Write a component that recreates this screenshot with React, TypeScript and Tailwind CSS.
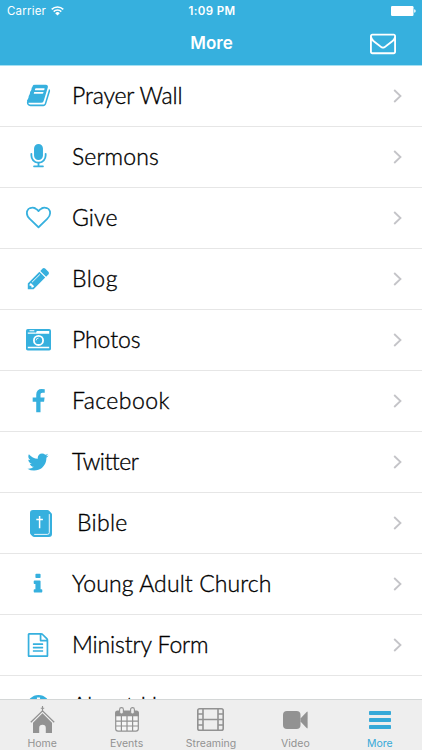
import React from "react";
import clsx from "clsx";

type IconProps = { className?: string };

// Solid glyph on the 1792 unit grid
function Glyph({ d, className }: { d: string; className?: string }) {
  return (
    <svg viewBox="0 0 1792 1792" fill="currentColor" className={className}>
      <path d={d} />
    </svg>
  );
}

const paths = {
  book: "M1703 478q40 57 18 129l-275 906q-19 64-76.500 107.500t-122.500 43.500h-923q-77 0-148.500-53.500t-99.500-131.500q-24-67-2-127 0-4 3-27t4-37q1-8-3-21.500t-3-19.500q2-11 8-21t16.500-23.500 16.500-23.500q23-38 45-91.500t30-91.500q3-10 .5-30t-.5-28q3-11 17-28t17-23q21-36 42-92t25-90q1-9-2.500-32t.5-28q4-13 22-30.500t22-22.500q19-26 42.500-84.500t27.500-96.500q1-8-3-25.500t-2-26.500q2-8 9-18t18-23 17-21q8-12 16.500-30.500t15-35 16-36 19.500-32 26.500-23.500 36-11.500 47.500 5.500l-1 3q38-9 51-9h761q74 0 114 56t18 130l-274 906q-36 119-71.500 153.500t-128.500 34.500h-869q-27 0-38 15-11 16-1 43 24 70 144 70h923q29 0 56-15.500t35-41.500l300-987q7-22 5-57 38 15 59 43zm-1064 2q-4 13 2 22.500t20 9.500h608q13 0 25.500-9.500t16.500-22.500l21-64q4-13-2-22.500t-20-9.500h-608q-13 0-25.500 9.500t-16.500 22.500zm-83 256q-4 13 2 22.500t20 9.500h608q13 0 25.500-9.500t16.500-22.500l21-64q4-13-2-22.500t-20-9.500h-608q-13 0-25.500 9.500t-16.500 22.500z",
  microphone: "M1472 704v128q0 221-147.500 384.500t-364.500 187.500v132h256q26 0 45 19t19 45-19 45-45 19h-640q-26 0-45-19t-19-45 19-45 45-19h256v-132q-217-24-364.500-187.500t-147.500-384.500v-128q0-26 19-45t45-19 45 19 19 45v128q0 185 131.500 316.500t316.500 131.500 316.500-131.500 131.500-316.500v-128q0-26 19-45t45-19 45 19 19 45zm-256-384v512q0 132-94 226t-226 94-226-94-94-226v-512q0-132 94-226t226-94 226 94 94 226z",
  heart: "M1664 596q0-81-21.500-143t-55-98.500-81.500-59.500-94-31-98-8-112 25.500-110.500 64-86.500 72-60 61.500q-18 22-49 22t-49-22q-24-28-60-61.500t-86.500-72-110.500-64-112-25.500-98 8-94 31-81.500 59.500-55 98.500-21.500 143q0 168 187 355l581 560 580-559q188-188 188-356zm128 0q0 221-229 450l-623 600q-18 18-44 18t-44-18l-624-602q-10-8-27.500-26t-55.500-65.500-68-97.500-53.500-121-23.500-138q0-220 127-344t351-124q62 0 126.500 21.500t120 58 95.500 68.500 76 68q36-36 76-68t95.500-68.500 120-58 126.500-21.500q224 0 351 124t127 344z",
  pencil: "M491 1536l91-91-235-235-91 91v107h128v128h107zm523-928q0-22-22-22-10 0-17 7l-542 542q-7 7-7 17 0 22 22 22 10 0 17-7l542-542q7-7 7-17zm-54-192l416 416-832 832h-416v-416zm683 96q0 53-37 90l-166 166-416-416 166-165q36-38 90-38 53 0 91 38l235 234q37 39 37 91z",
  facebook: "M1343 12v264h-157q-86 0-116 36t-30 108v189h293l-39 296h-254v759h-306v-759h-255v-296h255v-218q0-186 104-288.500t277-102.500q147 0 228 12z",
  twitter: "M1684 408q-67 98-162 167 1 14 1 42 0 130-38 259.500t-115.500 248.500-184.500 210.500-258 146-323 54.500q-271 0-496-145 35 4 78 4 225 0 401-138-105-2-188-64.500t-114-159.500q33 5 61 5 43 0 85-11-112-23-185.500-111.500t-73.500-205.500v-4q68 38 146 41-66-44-105-115t-39-154q0-88 44-163 121 149 294.500 238.500t371.500 99.500q-8-38-8-74 0-134 94.500-228.500t228.500-94.500q140 0 236 102 109-21 205-78-37 115-142 178 93-10 186-50z",
  info: "M1216 1344v128q0 26-19 45t-45 19h-512q-26 0-45-19t-19-45v-128q0-26 19-45t45-19h64v-384h-64q-26 0-45-19t-19-45v-128q0-26 19-45t45-19h384q26 0 45 19t19 45v576h64q26 0 45 19t19 45zm-128-1152v192q0 26-19 45t-45 19h-256q-26 0-45-19t-19-45v-192q0-26 19-45t45-19h256q26 0 45 19t19 45z",
  file: "M1596 380q28 28 48 76t20 88v1152q0 40-28 68t-68 28h-1344q-40 0-68-28t-28-68v-1600q0-40 28-68t68-28h896q40 0 88 20t76 48zm-444-244v376h376q-10-29-22-41l-313-313q-12-12-41-22zm384 1528v-1024h-416q-40 0-68-28t-28-68v-416h-768v1536h1280zm-1024-864q0-14 9-23t23-9h704q14 0 23 9t9 23v64q0 14-9 23t-23 9h-704q-14 0-23-9t-9-23v-64zm736 224q14 0 23 9t9 23v64q0 14-9 23t-23 9h-704q-14 0-23-9t-9-23v-64q0-14 9-23t23-9h704zm0 256q14 0 23 9t9 23v64q0 14-9 23t-23 9h-704q-14 0-23-9t-9-23v-64q0-14 9-23t23-9h704z",
  envelope: "M1664 1504v-768q-32 36-69 66-268 206-426 338-51 43-83 67t-86.500 48.500-102.500 24.500h-2q-48 0-102.500-24.500t-86.500-48.500-83-67q-158-132-426-338-37-30-69-66v768q0 13 9.500 22.500t22.500 9.500h1472q13 0 22.500-9.500t9.500-22.500zm0-1051v-24.500l-.5-13-3-12.500-5.500-9-9-7.500-14-2.500h-1472q-13 0-22.500 9.500t-9.500 22.500q0 168 147 284 193 152 401 317 6 5 35 29.500t46 37.500 44.500 31.500 50.500 27.500 43 9h2q20 0 43-9t50.500-27.500 44.500-31.500 46-37.500 35-29.500q208-165 401-317 54-43 100.500-115.500t46.500-131.500zm128-37v1088q0 66-47 113t-113 47h-1472q-66 0-113-47t-47-113v-1088q0-66 47-113t113-47h1472q66 0 113 47t47 113z",
};

function CameraIcon({ className }: IconProps) {
  return (
    <svg viewBox="0 0 25 25" className={className}>
      <rect x="0" y="2" width="25" height="21.5" rx="1.8" fill="currentColor" />
      <path d="M10.800 4.100h12.400v2.700H9.600zM1.800 19.800h21.400v1.500H1.800z" fill="#fff" />
      <path d="M3.500 3.300h4.800v1H3.500zM1.800 5.600h8v1.200h-8z" fill="#fff" />
      <circle cx="12.5" cy="13.4" r="4.6" fill="none" stroke="#fff" strokeWidth="1.8" />
      <path d="M10.200 13.400a2.300 2.300 0 0 1 2.300-2.300" fill="none" stroke="#fff" strokeWidth=".8" />
    </svg>
  );
}

function BibleIcon({ className }: IconProps) {
  return (
    <svg viewBox="0 0 22 27" className={className}>
      <path d="M3 0h14.500q1.700 0 2.300 1.500l1 .9q1.200.8 1.200 2.100V24q0 3-3 3H4.500q-1.500 0-2.600-1.200L.8 24.600Q0 23.800 0 22.500V3q0-3 3-3z" fill="currentColor" />
      <path d="M19.300 4.500v18q0 1.900-1.900 1.900H4.600" fill="none" stroke="#fff" strokeWidth=".9" strokeLinecap="round" />
      <path d="M9.600 6v12.200M6.300 9.400h6.600" fill="none" stroke="#fff" strokeWidth="1.500" />
    </svg>
  );
}

function AboutIcon({ className }: IconProps) {
  return (
    <svg viewBox="0 0 22 22" className={className}>
      <circle cx="11" cy="11" r="11" fill="currentColor" />
      <path d="M9.500 2.500h3v3h-3zM8 8h4.500v7H14v2.500H8V15h1.500v-4.500H8z" fill="#fff" />
    </svg>
  );
}

function ChurchIcon({ className }: IconProps) {
  return (
    <svg viewBox="0 0 25 28" className={className}>
      <path d="M12.500 0v6M10.800 2.300h3.400" stroke="currentColor" strokeWidth="1.100" />
      <path d="M.8 16.200 12.500 4.800l11.700 11.400" fill="none" stroke="currentColor" strokeWidth="1.300" />
      <path d="M12.500 7.300 22 16.700V27h-6.200v-5a3.300 3.300 0 0 0-6.600 0v5H3V16.700z" fill="currentColor" />
    </svg>
  );
}

function CalendarIcon({ className }: IconProps) {
  return (
    <svg viewBox="0 0 24 25" className={className}>
      <path d="M1 9.500h22V22q0 2-2 2H3q-2 0-2-2z" fill="#f6f6f6" />
      <path d="M0 6q0-2.500 2.500-2.500h19Q24 3.500 24 6v3.200H0z" fill="currentColor" />
      <path
        d="M.7 8v13.800q0 2.400 2.400 2.400h17.800q2.400 0 2.400-2.400V8M1 14.100h22M1 19h22M6.400 9v15M12 9v15M17.600 9v15"
        fill="none"
        stroke="currentColor"
        strokeWidth="1.200"
      />
      <rect x="4.600" y=".6" width="3.800" height="6.500" rx="1.900" fill="#eee" stroke="currentColor" strokeWidth="1.100" />
      <rect x="15.600" y=".6" width="3.800" height="6.500" rx="1.900" fill="#eee" stroke="currentColor" strokeWidth="1.100" />
    </svg>
  );
}

function FilmIcon({ className }: IconProps) {
  return (
    <svg viewBox="0 0 27 23" className={className}>
      <g fill="none" stroke="currentColor" strokeWidth="1.600">
        <rect x=".8" y=".8" width="25.400" height="21.400" rx="1.800" />
        <path d="M6 1v21M21 1v21M6 11.500h15M1 6h5M1 11.500h5M1 17h5M21 6h5M21 11.500h5M21 17h5" />
      </g>
    </svg>
  );
}

function VideoIcon({ className }: IconProps) {
  return (
    <svg viewBox="0 0 25 18" fill="currentColor" className={className}>
      <rect width="17.500" height="18" rx="4" />
      <path d="M17.500 7.600 23.600 1q1-.9 1 .3v15.400q0 1.200-1 .3l-6.100-6.600z" />
    </svg>
  );
}

function MenuIcon({ className }: IconProps) {
  return (
    <svg viewBox="0 0 22 18" fill="currentColor" className={className}>
      <rect width="22" height="4" rx=".8" />
      <rect y="7" width="22" height="4" rx=".8" />
      <rect y="14" width="22" height="4" rx=".8" />
    </svg>
  );
}

const items = [
  { label: "Prayer Wall", icon: <Glyph d={paths.book} className="size-[25px]" />, text: "tracking-[-0.15px]" },
  { label: "Sermons", icon: <Glyph d={paths.microphone} className="size-[25px]" />, text: "tracking-[0.1px]" },
  { label: "Give", icon: <Glyph d={paths.heart} className="size-[25px]" />, text: "tracking-[0.1px]" },
  { label: "Blog", icon: <Glyph d={paths.pencil} className="size-[25px]" />, text: "tracking-[0.5px]" },
  { label: "Photos", icon: <CameraIcon className="size-[25px]" />, text: "tracking-[-0.1px]" },
  { label: "Facebook", icon: <Glyph d={paths.facebook} className="size-[25px]" />, text: "tracking-[0.45px]" },
  { label: "Twitter", icon: <Glyph d={paths.twitter} className="size-6" />, text: "tracking-[-0.5px]" },
  { label: "Bible", icon: <BibleIcon className="ml-[5px] h-[27px] w-[22px]" />, text: "pl-[5px] tracking-[0.3px]" },
  { label: "Young Adult Church", icon: <Glyph d={paths.info} className="size-6" />, text: "tracking-[0.1px]" },
  { label: "Ministry Form", icon: <Glyph d={paths.file} className="size-6" />, text: "tracking-[-0.12px]" },
  { label: "About Us", icon: <AboutIcon className="size-[23px]" />, text: "tracking-[0.2px]" },
];

const tabs = [
  { label: "Home", icon: <ChurchIcon className="h-7 w-[25px]" /> },
  { label: "Events", icon: <CalendarIcon className="h-[25px] w-6" /> },
  { label: "Streaming", icon: <FilmIcon className="h-[23px] w-[27px]" /> },
  { label: "Video", icon: <VideoIcon className="h-[18px] w-[25px]" /> },
  { label: "More", icon: <MenuIcon className="h-[18px] w-[22px]" />, active: true },
];

function StatusBar() {
  return (
    <div className="grid h-[23px] grid-cols-3 items-center pl-[7px] pr-[6px] pt-px text-[11.500px] leading-none">
      <div className="flex items-center gap-[5px]">
        <span className="tracking-[0.2px]">Carrier</span>
        <svg viewBox="0 0 13 10" className="mb-[2px] h-[10px] w-[13px]">
          <path d="M.7 3.400a8.300 8.300 0 0 1 11.600 0M2.700 5.600a5.400 5.400 0 0 1 7.600 0" fill="none" stroke="#fff" strokeWidth="1.500" />
          <path d="M4.200 7.200a3.300 3.300 0 0 1 4.600 0L6.500 9.600z" fill="#fff" />
        </svg>
      </div>
      <span className="pl-px text-center font-semibold tracking-[0.4px]">1:09 PM</span>
      <svg viewBox="0 0 25 10" fill="#fff" className="mb-[2px] h-[10px] w-[25px] justify-self-end">
        <rect width="22.500" height="10" rx="1.200" />
        <path d="M23.200 3.200q1.500.3 1.500 1.800t-1.500 1.800z" />
      </svg>
    </div>
  );
}

export default function App() {
  return (
    <div className="flex h-[750px] w-[422px] flex-col overflow-hidden bg-white font-['Inter',sans-serif]">
      <header className="h-[65.500px] shrink-0 border-b border-[#a5e0f2] bg-[#36b0de] text-white">
        <StatusBar />
        <div className="grid h-[41px] grid-cols-[1fr_auto_1fr] items-center">
          <span />
          <h1 className="pl-px text-[17px] font-semibold leading-none">More</h1>
          <button className="mr-[26px] justify-self-end pb-[2px]">
            <Glyph d={paths.envelope} className="size-[26px]" />
          </button>
        </div>
      </header>

      <ul className="min-h-0 flex-1 overflow-hidden">
        {items.map((item) => (
          <li key={item.label} className="flex h-[61.100px] items-center border-b border-[#e6e6e6]">
            <span className="flex w-[72px] shrink-0 items-center justify-center pl-[4px] text-[#36b0de]">
              {item.icon}
            </span>
            <span
              className={clsx(
                "flex-1 whitespace-nowrap pb-px font-['Lato',sans-serif] text-[23px] font-light leading-none text-black [-webkit-text-stroke:0.35px_black]",
                item.text
              )}
            >
              {item.label}
            </span>
            <svg viewBox="0 0 9 14" className="mr-5 h-[14px] w-[9px]">
              <path d="M1.200 1 7.500 7l-6.300 6" fill="none" stroke="#c4c4c8" strokeWidth="1.800" />
            </svg>
          </li>
        ))}
      </ul>

      <nav className="grid h-[51px] shrink-0 grid-cols-5 border-t border-[#d4d7d7] bg-[#eee]">
        {tabs.map((tab) => (
          <div
            key={tab.label}
            className={clsx("flex flex-col items-center", tab.active ? "text-[#36a9d8]" : "text-[#929292]")}
          >
            <div className="flex h-[37px] items-center pt-[2px]">{tab.icon}</div>
            <span className="pt-px text-[10.500px] leading-[12px]">{tab.label}</span>
          </div>
        ))}
      </nav>
    </div>
  );
}
